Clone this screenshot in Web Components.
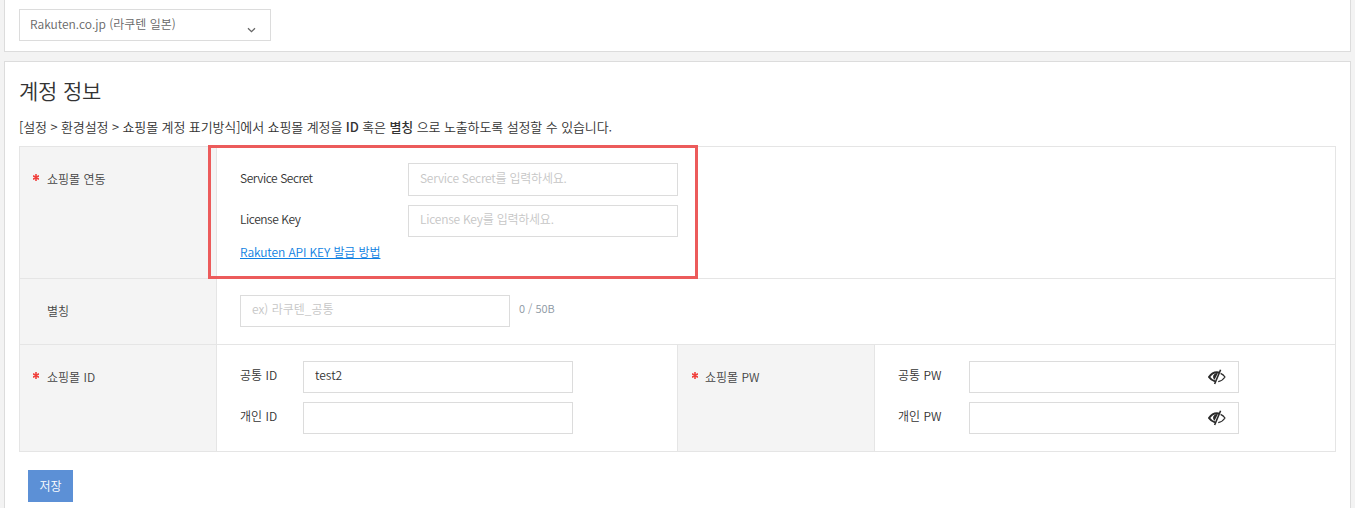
<!DOCTYPE html>
<html lang="ko">
<head>
<meta charset="utf-8">
<title>계정 정보</title>
<style>
  html, body { margin: 0; height: 508px; overflow: hidden; }
  body {
    background: #f3f3f3;
    color: #333;
    font: 350 12px/18px "Noto Sans CJK KR", "Noto Sans", sans-serif;
  }
  a-page { display: block; height: 508px; overflow: hidden; }
</style>
</head>
<body>
<a-page>
  <a-card flat style="margin-bottom: 9px">
    <mall-select>Rakuten.co.jp (라쿠텐 일본)</mall-select>
  </a-card>
  <a-card>
    <h-title>계정 정보</h-title>
    <a-note>[설정 &gt; 환경설정 &gt; 쇼핑몰 계정 표기방식]에서 쇼핑몰 계정을 <b>ID</b> 혹은 <b>별칭</b> 으로 노출하도록 설정할 수 있습니다.</a-note>
    <form-table>
      <form-row>
        <form-label required>쇼핑몰 연동</form-label>
        <form-cell gap="9" style="flex: 1">
          <red-box></red-box>
          <field-row tall tight label="Service Secret" label-width="168" input-width="270" placeholder="Service Secret를 입력하세요."></field-row>
          <field-row tight label="License Key" label-width="168" input-width="270" placeholder="License Key를 입력하세요."></field-row>
          <api-link href="#">Rakuten API KEY 발급 방법</api-link>
        </form-cell>
      </form-row>
      <form-row>
        <form-label>별칭</form-label>
        <form-cell style="flex: 1">
          <field-row input-width="270" placeholder="ex) 라쿠텐_공통" hint="0 / 50B"></field-row>
        </form-cell>
      </form-row>
      <form-row>
        <form-label required>쇼핑몰 ID</form-label>
        <form-cell gap="9" style="width: 460px">
          <field-row label="공통 ID" label-width="63" input-width="270" value="test2"></field-row>
          <field-row label="개인 ID" label-width="63" input-width="270"></field-row>
        </form-cell>
        <form-label required wide>쇼핑몰 PW</form-label>
        <form-cell gap="9" style="flex: 1">
          <field-row label="공통 PW" label-width="71" input-width="270" secret></field-row>
          <field-row label="개인 PW" label-width="71" input-width="270" secret></field-row>
        </form-cell>
      </form-row>
    </form-table>
    <save-button>저장</save-button>
  </a-card>
</a-page>

<script>
class ACard extends HTMLElement {
  constructor() {
    super();
    this.attachShadow({ mode: "open" }).innerHTML = `<style>
      :host { display: block; margin: 0 4px; background: #fff; border: 1px solid #dcdcdc; padding: 13px 14px 40px; }
      :host([flat]) { border-top: 0; padding: 9px 14px 10px; }
    </style><slot></slot>`;
  }
}

class MallSelect extends HTMLElement {
  constructor() {
    super();
    this.attachShadow({ mode: "open" }).innerHTML = `<style>
      :host { display: flex; align-items: flex-start; justify-content: space-between; box-sizing: border-box;
        width: 252px; height: 32px; border: 1px solid #dcdcdc; padding: 5px 14px 0 10px; color: #666; }
      svg { margin-top: 12px; display: block; }
    </style><slot></slot>
    <svg width="9" height="6" viewBox="0 0 9 6"><path d="M1 1.2 4.5 4.6 8 1.2" fill="none" stroke="#666" stroke-width="1.3"/></svg>`;
  }
}

class HTitle extends HTMLElement {
  constructor() {
    super();
    this.attachShadow({ mode: "open" }).innerHTML = `<style>
      :host { display: block; font-size: 21px; line-height: 30px; letter-spacing: -0.2px; color: #333; margin-bottom: 13px; }
    </style><slot></slot>`;
  }
}

class ANote extends HTMLElement {
  constructor() {
    super();
    this.attachShadow({ mode: "open" }).innerHTML = `<style>
      :host { display: block; margin-bottom: 10px; color: #333; font-size: 13px; letter-spacing: -0.11px; }
      ::slotted(b) { font-weight: 500; }
    </style><slot></slot>`;
  }
}

class FormTable extends HTMLElement {
  constructor() {
    super();
    this.attachShadow({ mode: "open" }).innerHTML = `<style>
      :host { display: block; border: 1px solid #e5e5e5; }
    </style><slot></slot>`;
  }
}

class FormRow extends HTMLElement {
  constructor() {
    super();
    this.attachShadow({ mode: "open" }).innerHTML = `<style>
      :host { display: flex; align-items: stretch; border-bottom: 1px solid #e5e5e5; }
      :host(:last-child) { border-bottom: 0; }
    </style><slot></slot>`;
  }
}

class FormLabel extends HTMLElement {
  constructor() {
    super();
    this.attachShadow({ mode: "open" }).innerHTML = `<style>
      :host { display: block; box-sizing: border-box; flex: none; width: 197px; background: #f4f4f4;
        border-right: 1px solid #e5e5e5; padding: 23px 0 0 27px; color: #444; position: relative; }
      :host([wide]) { width: 198px; border-left: 1px solid #e5e5e5; }
      .star { display: none; position: absolute; left: 13px; top: 27px; }
      :host([wide]) .star { left: 14px; }
      :host([required]) .star { display: block; }
    </style>
    <svg class="star" width="6" height="7" viewBox="0 0 6 7"><path d="M3 0v7M0 1.7l6 3.6M0 5.3l6-3.6" stroke="#f0403c" stroke-width="1.6"/></svg>
    <slot></slot>`;
  }
}

class FormCell extends HTMLElement {
  constructor() {
    super();
    const gap = this.getAttribute("gap") || 0;
    this.attachShadow({ mode: "open" }).innerHTML = `<style>
      :host { display: flex; flex-direction: column; gap: ${gap}px; box-sizing: border-box;
        padding: 16px 23px 17px; position: relative; }
    </style><slot></slot>`;
  }
}

class FieldRow extends HTMLElement {
  constructor() {
    super();
    const label = this.getAttribute("label");
    const secret = this.hasAttribute("secret");
    const hint = this.getAttribute("hint");
    this.attachShadow({ mode: "open" }).innerHTML = `<style>
      :host { display: flex; align-items: flex-start; }
      .lbl { flex: none; width: ${this.getAttribute("label-width")}px; padding-top: 5px; color: #333; }
      :host([tall]) .lbl { padding-top: 6px; }
      :host([tight]) .lbl { letter-spacing: -0.44px; }
      .box { position: relative; flex: none; width: ${this.getAttribute("input-width")}px; height: 32px; }
      :host([tall]) .box { height: 33px; }
      input { box-sizing: border-box; width: 100%; height: 100%; margin: 0; border: 1px solid #dcdcdc; outline: 0;
        padding: 0 11px 5px; font: inherit; color: #333; background: #fff; border-radius: 0; }
      input::placeholder { color: #c6c6c6; opacity: 1; }
      :host([tight]) input::placeholder { letter-spacing: -0.23px; }
      .eye { position: absolute; right: 13px; top: 8px; display: block; }
      .hint { margin: 4px 0 0 9px; color: #8d97a3; font-size: 11px; }
    </style>
    ${label ? `<span class="lbl">${label}</span>` : ""}
    <span class="box">
      <input type="${secret ? "password" : "text"}" placeholder="${this.getAttribute("placeholder") || ""}" value="${this.getAttribute("value") || ""}">
      ${secret ? `<svg class="eye" width="18" height="16" viewBox="0 0 18 16">
        <path d="M7 12.4C4.4 11.6 2.2 9.8 1 8 3 5 6 3.2 9 3.2c.9 0 1.7.1 2.5.4" fill="none" stroke="#2b2b2b" stroke-width="2"/>
        <path d="M5 8A4 4 0 0 1 9.8 4.2L6.6 10.8A4 4 0 0 1 5 8Z" fill="#2b2b2b"/>
        <path d="M12.6 4.4C14.6 5.3 16 6.6 17 8c-1.5 2.3-4 4.1-6.8 4.6" fill="none" stroke="#2b2b2b" stroke-width="1.2"/>
        <path d="M12.6 .8 6.6 15" stroke="#2b2b2b" stroke-width="1.6"/>
      </svg>` : ""}
    </span>
    ${hint ? `<span class="hint">${hint}</span>` : ""}`;
  }
}

class ApiLink extends HTMLElement {
  constructor() {
    super();
    this.attachShadow({ mode: "open" }).innerHTML = `<style>
      :host { display: block; margin-top: -3px; letter-spacing: -0.1px; }
      a { color: #0d7fe2; text-decoration: underline; }
    </style><a href="${this.getAttribute("href") || "#"}"><slot></slot></a>`;
  }
}

class RedBox extends HTMLElement {
  constructor() {
    super();
    this.attachShadow({ mode: "open" }).innerHTML = `<style>
      :host { position: absolute; left: -9px; top: -2px; width: 490px; height: 134px; box-sizing: border-box;
        border: 3px solid #ec5b5b; pointer-events: none; }
    </style>`;
  }
}

class SaveButton extends HTMLElement {
  constructor() {
    super();
    this.attachShadow({ mode: "open" }).innerHTML = `<style>
      :host { display: block; width: 45px; margin: 18px 0 0 9px; }
      button { display: block; width: 45px; height: 32px; padding: 0; border: 0; background: #5c90d6; color: #fff; font: inherit; }
    </style><button type="button"><slot></slot></button>`;
  }
}

customElements.define("a-card", ACard);
customElements.define("mall-select", MallSelect);
customElements.define("h-title", HTitle);
customElements.define("a-note", ANote);
customElements.define("form-table", FormTable);
customElements.define("form-row", FormRow);
customElements.define("form-label", FormLabel);
customElements.define("form-cell", FormCell);
customElements.define("field-row", FieldRow);
customElements.define("api-link", ApiLink);
customElements.define("red-box", RedBox);
customElements.define("save-button", SaveButton);
customElements.define("a-page", class extends HTMLElement {});
</script>
</body>
</html>
